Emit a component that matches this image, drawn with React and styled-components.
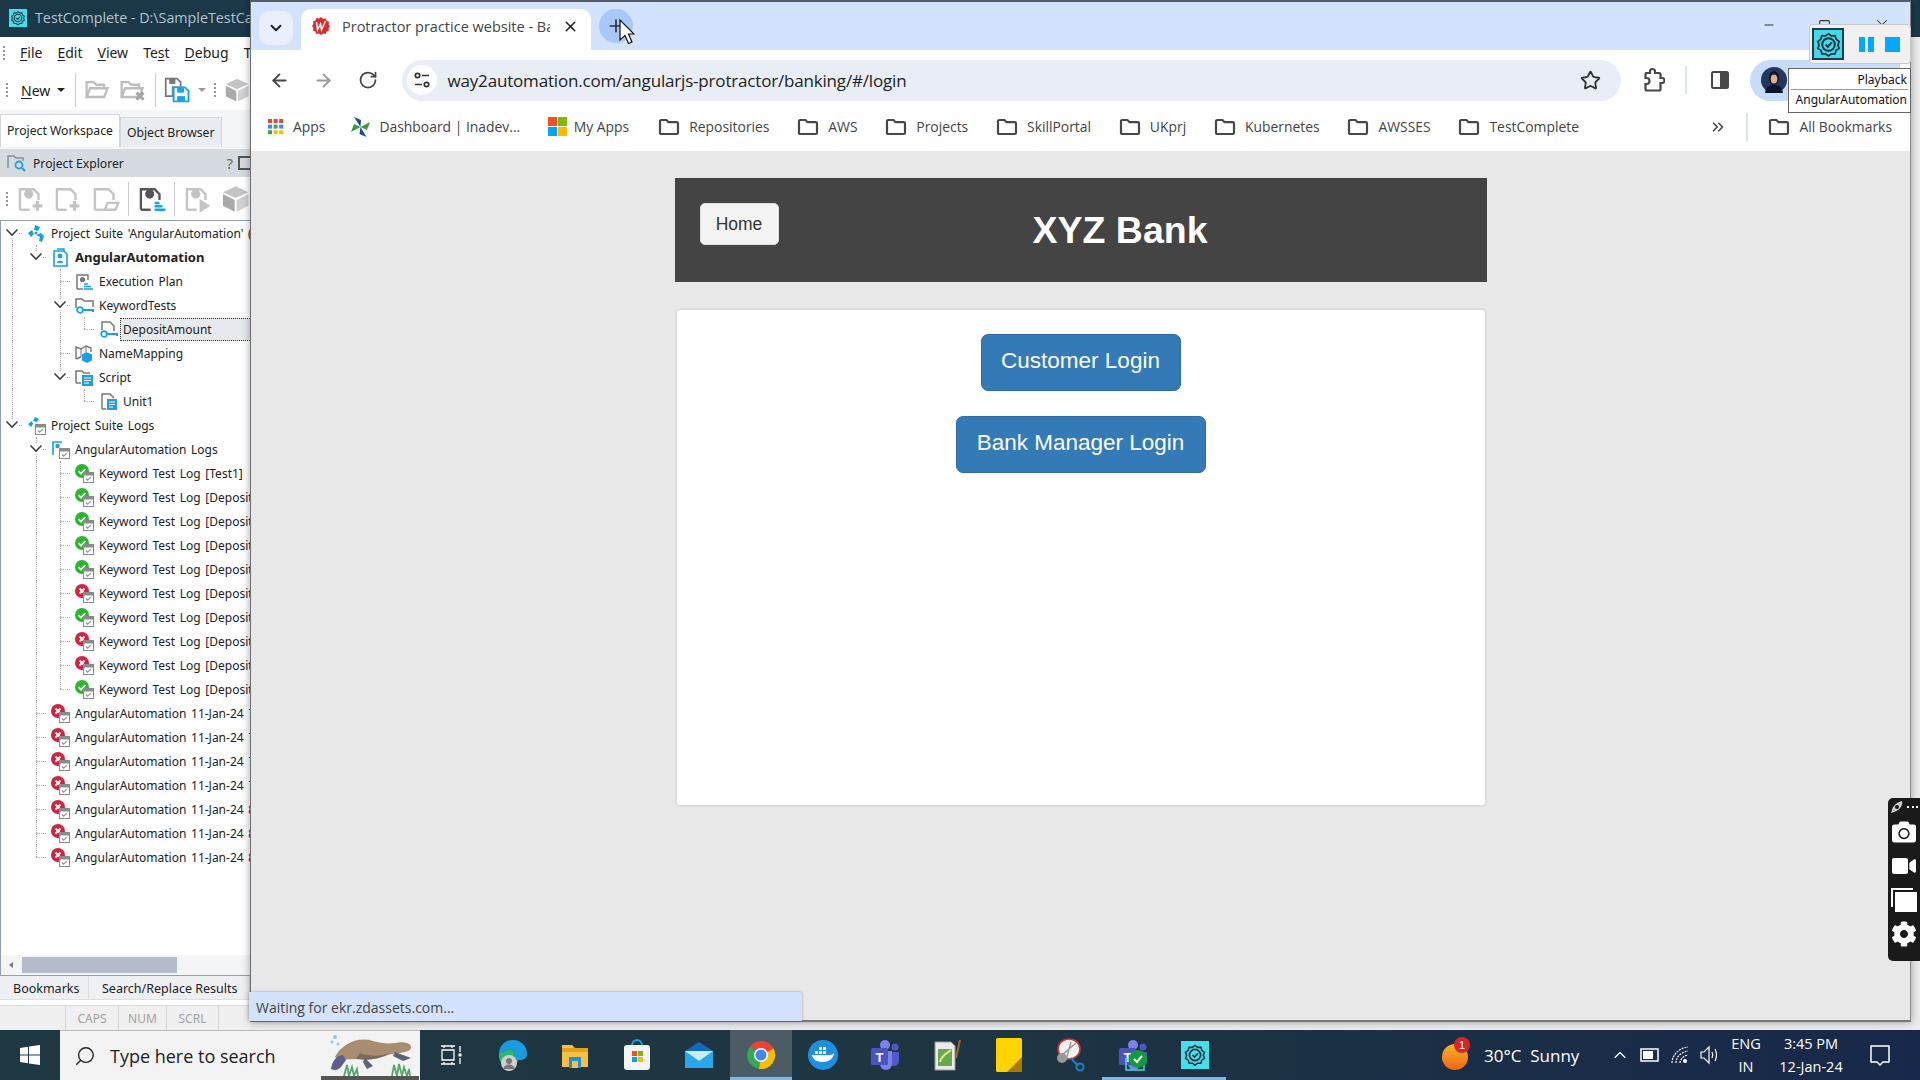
import styled, { createGlobalStyle } from "styled-components";
import { ArrowLeft, ArrowRight, RotateCw, Star, X, Plus, ChevronDown, ChevronsRight, Search, ChevronUp, Minus, Square } from "lucide-react";
import { FaCamera, FaVideo, FaCog } from "react-icons/fa";

const UI_FONT = `"Open Sans", "Noto Sans", "Liberation Sans", sans-serif`;
const IDE_FONT = `"Noto Sans", "DejaVu Sans", sans-serif`;

const GlobalStyle = createGlobalStyle`
    html, body {
        margin: 0;
        padding: 0;
        width: 1920px;
        height: 1080px;
        overflow: hidden;
        font-family: ${UI_FONT};
    }
    * { box-sizing: border-box; }
`;

const Desktop = styled.div`
    width: 1920px;
    height: 1080px;
    display: flex;
    flex-direction: column;
    position: relative;
    overflow: hidden;
`;
const Workspace = styled.div`
    height: 1030px;
    display: flex;
    align-items: flex-start;
    background: #ececec;
`;

/* ---------- TestComplete window ---------- */
const Ide = styled.div`
    width: 250px;
    height: 1030px;
    flex: none;
    display: flex;
    flex-direction: column;
    font-family: ${IDE_FONT};
    color: #222;
    overflow: hidden;
    background: #f4f5f6;
`;
const IdeTitle = styled.div`
    height: 37px;
    flex: none;
    background: #1b3849;
    color: #b4c3cc;
    display: flex;
    align-items: center;
    gap: 8px;
    padding: 0 0 2px 9px;
    font-family: ${UI_FONT};
    font-size: 14.3px;
    white-space: nowrap;
`;
const MenuBar = styled.div`
    height: 33px;
    flex: none;
    background: #fff;
    display: flex;
    align-items: center;
    padding: 0 0 2px 3px;
    gap: 15px;
    font-size: 14px;
    white-space: nowrap;
`;
const Grip = styled.span`
    width: 2px;
    height: ${(props) => props.$h || 14}px;
    flex: none;
    border-left: 2px dotted #999;
`;
const MenuItem = styled.span`
    color: #222;
    u { text-underline-offset: 2px; }
`;
const NewMenu = styled.span`
    display: flex;
    align-items: center;
    gap: 7px;
    margin: 0 2px 0 5px;
    u { text-underline-offset: 2px; }
`;
const DropCaret = styled.span`
    width: 0;
    height: 0;
    border: 4px solid transparent;
    border-top: 4px solid ${(props) => props.$color || "#222"};
    border-bottom: none;
`;
const IdeToolbar = styled.div`
    height: ${(props) => props.$h}px;
    flex: none;
    background: #fff;
    display: flex;
    align-items: center;
    gap: 8px;
    padding-left: 6px;
    font-size: 14px;
    white-space: nowrap;
`;
const ToolDivider = styled.span`
    width: 1px;
    height: 34px;
    flex: none;
    background: #ccc;
`;
const TabRow = styled.div`
    height: 39px;
    flex: none;
    padding-top: 4px;
    display: flex;
    align-items: flex-end;
    font-size: 12.2px;
    border-bottom: 2px solid #f4f5f6;
`;
const WorkspaceTab = styled.div`
    height: ${(props) => (props.$active ? 33 : 30)}px;
    padding: 0 6px ${(props) => (props.$active ? 2 : 0)}px;
    display: flex;
    align-items: center;
    white-space: nowrap;
    background: ${(props) => (props.$active ? "#fff" : "#e9ecf0")};
    border: 1px solid #d3d7dd;
    border-bottom: none;
`;
const PanelHeader = styled.div`
    height: 28px;
    flex: none;
    background: #d6dbe2;
    display: flex;
    align-items: center;
    padding-left: 7px;
    gap: 6px;
    font-size: 12.2px;
`;
const PanelButtons = styled.div`
    margin-left: auto;
    display: flex;
    align-items: center;
    gap: 5px;
    font-size: 15px;
    color: #666;
    margin-right: -2px;
`;
const PanelBox = styled.span`
    width: 14px;
    height: 14px;
    border: 2px solid #555;
`;
const Tree = styled.div`
    flex: none;
    height: 735px;
    background: #fff;
    border-top: 1px solid #8fa0b5;
    border-left: 1px solid #8fa0b5;
    overflow: hidden;
    font-size: 12px;
    word-spacing: 1.5px;
`;
const TreeRow = styled.div`
    height: 24px;
    display: flex;
    align-items: center;
    white-space: nowrap;
    margin-left: -1px;
    font-weight: ${(props) => (props.$bold ? 700 : 400)};
    font-size: ${(props) => (props.$bold ? "13px" : "12px")};
`;
const GuideCell = styled.span`
    width: 24px;
    height: 24px;
    flex: none;
    position: relative;
    &::before {
        content: "";
        position: absolute;
        left: 12px;
        top: ${(props) => (props.$kind === "R" ? "12px" : "0")};
        height: ${(props) => ("LR".includes(props.$kind) ? "12px" : "24px")};
        border-left: 1px dotted #aaa;
        display: ${(props) => (props.$kind === " " ? "none" : "block")};
    }
    &::after {
        content: "";
        position: absolute;
        left: 12px;
        right: 2px;
        top: 12px;
        border-top: 1px dotted #aaa;
        display: ${(props) => ("TLR".includes(props.$kind) ? "block" : "none")};
    }
`;
const Chevron = styled.svg`
    position: absolute;
    left: 5px;
    top: 7px;
    z-index: 1;
    background: #fff;
`;
const IconCell = styled.span`
    width: 24px;
    height: 24px;
    flex: none;
    display: flex;
    align-items: center;
    justify-content: center;
`;
const TreeLabel = styled.span`
    padding-left: 2px;
    height: 23px;
    line-height: 21px;
    flex: ${(props) => (props.$selected ? 1 : "none")};
    background: ${(props) => (props.$selected ? "#e6e9ee" : "transparent")};
    border: 1px ${(props) => (props.$selected ? "dotted #333" : "solid transparent")};
    border-right: none;
`;
const HScroll = styled.div`
    height: 21px;
    flex: none;
    background: #f4f5f6;
    border-left: 1px solid #8fa0b5;
    border-bottom: 1px solid #8fa0b5;
    display: flex;
    align-items: center;
    padding-left: 8px;
    gap: 9px;
`;
const ScrollArrow = styled.span`
    border: 3px solid transparent;
    border-right: 4px solid #777;
    border-left: none;
`;
const ScrollThumb = styled.span`
    width: 155px;
    height: 16px;
    background: #b4bccb;
`;
const BottomTabs = styled.div`
    height: 24px;
    flex: none;
    display: flex;
    font-size: 12.5px;
    background: #eef0f3;
    border-bottom: 1px solid #dcdfe3;
`;
const BottomTab = styled.div`
    width: ${(props) => props.$w}px;
    flex: none;
    padding: 2px 0 0 13px;
    display: flex;
    align-items: center;
    white-space: nowrap;
    border-right: 1px solid #dcdfe3;
`;
const StatusGap = styled.div`
    height: 5px;
    flex: none;
    background: #fff;
`;
const IdeStatus = styled.div`
    height: 25px;
    flex: none;
    background: #f0f0f0;
    border-top: 1px solid #ddd;
    padding-left: 65px;
    display: flex;
    font-size: 12px;
    color: #a3a3a3;
`;
const StatusCell = styled.div`
    width: ${(props) => props.$w}px;
    flex: none;
    display: flex;
    align-items: center;
    justify-content: center;
    border-left: 1px solid #d6d6d6;
`;

/* ---------- Chrome window ---------- */
const Browser = styled.div`
    width: 1661px;
    height: 1022px;
    flex: none;
    display: flex;
    flex-direction: column;
    position: relative;
    border-top: 2px solid #565c66;
    border-left: 1px solid #6b6f75;
    border-right: 1px solid #888;
    border-bottom: 2px solid #777;
    box-shadow: 0 0 8px rgba(0, 0, 0, 0.35);
    z-index: 1;
    background: #fff;
`;
const TabStrip = styled.div`
    height: 48px;
    flex: none;
    background: #d3e3fd;
    display: flex;
    align-items: flex-end;
    padding-left: 8px;
`;
const TabListButton = styled.div`
    width: 34px;
    height: 34px;
    margin-bottom: 5px;
    border-radius: 10px;
    background: #e9f0fb;
    display: flex;
    align-items: center;
    justify-content: center;
    color: #222;
`;
const ActiveTab = styled.div`
    width: 290px;
    height: 41px;
    margin-left: 8px;
    background: #fff;
    border-radius: 10px 10px 0 0;
    display: flex;
    align-items: center;
    padding: 0 10px 7px 10px;
    font-size: 14.5px;
    color: #444;
    white-space: nowrap;
`;
const TabText = styled.span`
    width: 208px;
    margin-left: 11px;
    overflow: hidden;
    flex: none;
`;
const TabClose = styled.span`
    margin-left: 12px;
    display: flex;
    color: #222;
`;
const NewTab = styled.div`
    width: 34px;
    height: 34px;
    margin: 0 0 7px 8px;
    border-radius: 50%;
    background: #a8c7fa;
    display: flex;
    align-items: center;
    justify-content: center;
    color: #333;
`;
const WindowControls = styled.div`
    margin-left: auto;
    align-self: flex-start;
    display: flex;
    align-items: center;
    gap: 42px;
    padding: 14px 19px 0 0;
    color: #333;
`;
const Toolbar = styled.div`
    height: 52px;
    flex: none;
    background: #fff;
    display: flex;
    align-items: center;
    padding: 8px 0 0 6px;
    color: #474747;
`;
const NavButton = styled.span`
    width: 44.5px;
    flex: none;
    display: flex;
    justify-content: center;
    color: ${(props) => (props.$disabled ? "#9a9a9a" : "#474747")};
`;
const Omnibox = styled.div`
    width: 1219px;
    height: 41px;
    margin-left: 11px;
    flex: none;
    background: #e9eef6;
    border-radius: 21px;
    display: flex;
    align-items: center;
    padding-left: 5px;
    font-size: 17px;
    letter-spacing: -0.18px;
    color: #222;
    white-space: nowrap;
`;
const SiteInfo = styled.span`
    width: 30px;
    height: 30px;
    border-radius: 50%;
    background: #fff;
    flex: none;
    display: flex;
    align-items: center;
    justify-content: center;
`;
const UrlText = styled.span`
    margin-left: 11px;
`;
const OmniStar = styled.span`
    margin-left: auto;
    margin-right: 20px;
    display: flex;
`;
const ToolIcon = styled.span`
    width: ${(props) => props.$w}px;
    flex: none;
    display: flex;
    justify-content: center;
`;
const ToolSep = styled.span`
    width: 2px;
    height: 28px;
    flex: none;
    background: #d3e3fd;
`;
const ProfilePill = styled.div`
    margin-left: -3px;
    width: 150px;
    height: 41px;
    flex: none;
    border-radius: 21px 0 0 21px;
    background: #c7dbfb;
    padding-left: 11px;
    display: flex;
    align-items: center;
`;
const BookmarkBar = styled.div`
    height: 50px;
    flex: none;
    background: #fff;
    border-bottom: 1px solid #e4e7ec;
    display: flex;
    align-items: center;
    padding-left: 17px;
    font-size: 13.9px;
    color: #444;
    white-space: nowrap;
`;
const Bookmark = styled.span`
    display: flex;
    align-items: center;
    gap: ${(props) => props.$gap || 9}px;
    margin-right: ${(props) => props.$mr ?? 27.8}px;
`;
const MoreBookmarks = styled.span`
    margin-left: auto;
    width: 30px;
    display: flex;
    justify-content: center;
    color: #444;
`;
const BarSep = styled.span`
    width: 2px;
    height: 28px;
    background: #d3e3fd;
    margin: 0 20px 0 13px;
`;
const Page = styled.div`
    flex: 1;
    background: #e8e8e8;
    padding-top: 26px;
    font-family: "Liberation Sans", Arial, sans-serif;
    display: flex;
    flex-direction: column;
    align-items: center;
`;
const BankHeader = styled.div`
    width: 812px;
    height: 104px;
    flex: none;
    background: #444;
    display: flex;
    align-items: flex-start;
    padding-left: 25px;
`;
const HomeButton = styled.button`
    width: 79px;
    height: 42px;
    margin-top: 25px;
    flex: none;
    background: #f4f4f4;
    border: 1px solid #ddd;
    border-radius: 5px;
    font-family: inherit;
    font-size: 17.5px;
    color: #333;
    padding: 0;
`;
const BankTitle = styled.h1`
    flex: 1;
    margin: 31px 25px 0 0;
    text-align: center;
    color: #fff;
    font-size: 37.5px;
    line-height: 42px;
    font-weight: 700;
`;
const LoginCard = styled.div`
    width: 812px;
    height: 499px;
    margin-top: 26px;
    flex: none;
    background: #fff;
    border: 2px solid #ddd;
    border-radius: 5px;
    padding-top: 24px;
    display: flex;
    flex-direction: column;
    align-items: center;
    gap: 25px;
`;
const PrimaryButton = styled.button`
    width: ${(props) => props.$w}px;
    height: 57px;
    background: #337ab7;
    border: 1px solid #2e6da4;
    border-radius: 7px;
    color: #fff;
    font-family: inherit;
    font-size: 22.5px;
    padding: 0 0 4px;
`;
const LoadStatus = styled.div`
    position: absolute;
    left: -2px;
    bottom: -1px;
    width: 553px;
    height: 29px;
    background: #d3e3fd;
    color: #444;
    font-size: 14px;
    display: flex;
    align-items: center;
    padding: 2px 0 0 7px;
    border-radius: 0 3px 0 0;
    box-shadow: 0 0 3px rgba(0, 0, 0, 0.3);
`;
const RightEdge = styled.div`
    flex: 1;
    height: 1030px;
    display: flex;
    flex-direction: column;
`;
const TitleTail = styled.div`
    height: 37px;
    background: #1b3849;
`;

/* ---------- floating recorder bits ---------- */
const PlaybackBar = styled.div`
    position: absolute;
    left: 1809px;
    top: 24px;
    width: 102px;
    height: 40px;
    background: #f1f1f1;
    border: 1px solid #c8c8c8;
    border-radius: 4px;
    display: flex;
    align-items: center;
    padding-left: 2px;
    z-index: 3;
`;
const PlaybackTile = styled.span`
    width: 32px;
    height: 32px;
    background: #3fdbe9;
    border: 2px solid #1d3b4b;
    display: flex;
    align-items: center;
    justify-content: center;
    flex: none;
`;
const PauseBars = styled.span`
    margin-left: 15px;
    width: 15px;
    height: 15px;
    border-left: 6px solid #00a8ff;
    border-right: 6px solid #00a8ff;
`;
const StopSquare = styled.span`
    margin-left: 11px;
    width: 15px;
    height: 15px;
    background: #00a8ff;
`;
const PlaybackTip = styled.div`
    position: absolute;
    left: 1788px;
    top: 68px;
    width: 123px;
    height: 45px;
    background: #fff;
    border: 1px solid #666;
    z-index: 2;
    font-family: ${IDE_FONT};
    font-size: 12px;
    color: #111;
    text-align: right;
    padding: 1px 2px 0;
`;
const TipLine = styled.div`
    height: ${(props) => (props.$rule ? 20 : 21)}px;
    line-height: 19px;
    border-bottom: ${(props) => (props.$rule ? "1px solid #999" : "none")};
    padding-right: 1px;
`;
const CaptureDock = styled.div`
    position: absolute;
    left: 1888px;
    top: 798px;
    width: 32px;
    height: 163px;
    background: #1a1a1a;
    border-radius: 5px 0 0 5px;
    color: #fff;
    display: flex;
    flex-direction: column;
    align-items: center;
    padding-top: 1px;
    z-index: 3;
`;
const DockTop = styled.div`
    height: 16px;
    display: flex;
    align-items: center;
    gap: 3px;
    font-size: 10px;
`;
const DockSlot = styled.div`
    height: 34px;
    display: flex;
    align-items: center;
    justify-content: center;
`;
const DockDots = styled.span`
    width: 11px;
    border-top: 2px dotted #fff;
`;
const Pointer = styled.svg`
    position: absolute;
    left: 619px;
    top: 19px;
    z-index: 4;
`;

/* ---------- taskbar ---------- */
const Taskbar = styled.div`
    height: 50px;
    flex: none;
    display: flex;
    align-items: stretch;
    background: linear-gradient(90deg, #1f3943 0%, #1e3542 50%, #18284a 100%);
    color: #fff;
    position: relative;
    z-index: 2;
`;
const StartSlot = styled.div`
    width: 60px;
    flex: none;
    display: flex;
    align-items: center;
    justify-content: center;
`;
const SearchBox = styled.div`
    width: 360px;
    flex: none;
    background: #f3f3f3;
    border-top: 1px solid #bbb;
    color: #222;
    display: flex;
    align-items: center;
    padding-left: 14px;
    gap: 14px;
    font-size: 18px;
    white-space: nowrap;
`;
const SearchArt = styled.span`
    margin-left: auto;
    display: flex;
`;
const TaskSlot = styled.div`
    width: 62px;
    flex: none;
    display: flex;
    align-items: center;
    justify-content: center;
    background: ${(props) => (props.$focus ? "#4c5c66" : "transparent")};
    border-bottom: 3px solid ${(props) => (props.$active ? "#76b9ed" : "transparent")};
    border-top: 3px solid transparent;
`;
const Tray = styled.div`
    margin-left: auto;
    display: flex;
    align-items: center;
    font-size: 14.5px;
    padding-right: 15px;
    color: #fff;
`;
const WeatherText = styled.span`
    width: 97px;
    margin: 0 24px 0 14px;
    font-size: 17px;
    white-space: nowrap;
`;
const TrayIcon = styled.span`
    width: 30px;
    flex: none;
    display: flex;
    justify-content: center;
`;
const TrayText = styled.div`
    width: ${(props) => props.$w}px;
    flex: none;
    text-align: center;
    line-height: 23px;
    white-space: nowrap;
`;
const NotifySlot = styled.span`
    width: 50px;
    flex: none;
    display: flex;
    justify-content: center;
`;

/* ---------- icons ---------- */
const Sealed = ({ size = 24, color = "#163040" }) => (
    <svg width={size} height={size} viewBox="0 0 24 24" fill="none" stroke={color} strokeWidth="1.7">
        <path d="M12 2l3 2.2 3.6-.2 1 3.5 2.9 2.2-1.2 3.4 1.2 3.4-3 1.9-1 3.5-3.6-.1L12 24l-2.9-2.2-3.6.1-1-3.5-3-1.9 1.2-3.4L1.5 9.7l2.9-2.2 1-3.5 3.6.2z" transform="translate(1.2 .6) scale(.9)" />
        <circle cx="12" cy="12" r="5.6" />
        <path d="M9.5 12l2 2 3.4-3.8" />
    </svg>
);
const AppTile = styled.span`
    width: ${(props) => props.$s}px;
    height: ${(props) => props.$s}px;
    background: #45dfe9;
    display: flex;
    align-items: center;
    justify-content: center;
    flex: none;
`;
const GreyFolder = ({ cross }) => (
    <svg width="31" height="28" viewBox="0 0 31 28" fill="none" stroke="#bdbdbd" strokeWidth="2.6">
        <path d="M3 22V5h8l3 3h9v4M3 22l4-10h20l-4 10z" />
        {cross && <path d="M20 17l8 8m0-8l-8 8" stroke="#a5a5a5" strokeWidth="3.4" />}
    </svg>
);
const SaveIcon = () => (
    <svg width="30" height="30" viewBox="0 0 30 30">
        <path d="M2 2h13l4 4v6H10v10H2z" fill="none" stroke="#777" strokeWidth="2" />
        <rect x="6" y="2" width="7" height="6" fill="#777" />
        <path d="M11 12h13l4 4v12H11z" fill="#fff" stroke="#17a4e6" strokeWidth="2.2" />
        <rect x="15" y="12" width="8" height="6" fill="#17a4e6" />
        <rect x="15" y="22" width="9" height="6" fill="#17a4e6" />
    </svg>
);
const CubeTool = () => (
    <svg width="30" height="30" viewBox="0 0 30 30">
        <path d="M15 2l13 6-13 6L2 8z" fill="#c4c4c4" />
        <path d="M2 10l12 6v12L2 22z" fill="#aaa" />
        <path d="M28 10l-12 6v12l12-6z" fill="#d0d0d0" />
    </svg>
);
const ProjectTool = ({ kind = "plus", dark }) => {
    const c = dark ? "#555" : "#c4c4c4";
    return (
        <svg width="30" height="30" viewBox="0 0 30 30" fill="none" stroke={c} strokeWidth="2.4">
            <path d="M4 26V5h14l5 5v6" />
            <path d="M4 26h10" />
            {kind !== "docplus" && kind !== "open" && <circle cx="13" cy="10" r="3.5" fill={c} />}
            {(kind === "plus" || kind === "docplus") && <path d="M22 17v10m-5-5h10" strokeWidth="3.2" />}
            {kind === "open" && <path d="M14 26l3-7h11l-3 7z" />}
            {kind === "bars" && <path d="M18 19h5m-5 3.5h8m-8 3.5h11" stroke="#18a4e6" strokeWidth="2.6" />}
            {kind === "play" && <path d="M17 15l11 7-11 7z" fill={c} stroke="none" />}
        </svg>
    );
};
const Check = () => <path d="M3.6 7.2l2.4 2.4 4.3-4.4" fill="none" stroke="#fff" strokeWidth="1.8" />;
const LogCalendar = () => (
    <g>
        <rect x="8.5" y="8.5" width="10" height="10" fill="#fff" stroke="#8b8b8b" />
        <rect x="8.5" y="8.5" width="10" height="3" fill="#8b8b8b" />
        <path d="M11 14.5l1.7 1.7 3-3" fill="none" stroke="#8b8b8b" strokeWidth="1.1" />
    </g>
);
const TreeIcon = ({ kind }) => {
    if (kind === "green" || kind === "red") {
        return (
            <svg width="19" height="19" viewBox="0 0 19 19">
                <circle cx="7" cy="7" r="7" fill={kind === "green" ? "#2db52d" : "#d5213f"} />
                {kind === "green" ? <Check /> : <path d="M4.5 4.5l5 5m0-5l-5 5" stroke="#fff" strokeWidth="1.9" />}
                <LogCalendar />
            </svg>
        );
    }
    const blue = "#1a9fe3";
    const grey = "#777";
    const svg = (body) => <svg width="19" height="19" viewBox="0 0 19 19" fill="none">{body}</svg>;
    switch (kind) {
        case "suite":
            return svg(<g fill={blue}><path d="M8 1l5 2-2 4-4-1zM1 9l4-3 2 4-3 3zM9 11l5-2 3 3-2 6-3-1 1-4z" /><circle cx="9" cy="9" r="1.5" /></g>);
        case "suitelog":
            return svg(<g><path d="M8 1l4 2-2 3-4-1zM1 8l4-3 1 3-2 3z" fill={blue} /><LogCalendar /></g>);
        case "project":
            return svg(<g><path d="M3 3h10l3 3v12H3z" fill="#fff" stroke={blue} strokeWidth="1.6" /><path d="M6 1h7v3" stroke={blue} strokeWidth="1.4" /><circle cx="9" cy="8" r="2.4" fill={blue} /><path d="M6 15c0-3 6-3 6 0z" fill={blue} /></g>);
        case "projectlog":
            return svg(<g><path d="M2 15V2h9" stroke={blue} strokeWidth="1.6" /><circle cx="6.5" cy="6" r="2.2" fill={blue} /><LogCalendar /></g>);
        case "plan":
            return svg(<g><path d="M2 17V3h11v5" stroke={grey} strokeWidth="1.5" /><path d="M2 17h6" stroke={grey} strokeWidth="1.5" /><circle cx="7.5" cy="7.5" r="2.6" fill={grey} /><path d="M9 12h4m-4 2.5h7m-7 2.5h9" stroke={blue} strokeWidth="1.6" /></g>);
        case "folderkey":
            return svg(<g><path d="M1 12V3h6l2 2h9v6" stroke={grey} strokeWidth="1.5" /><circle cx="5" cy="14" r="2.8" stroke={blue} strokeWidth="1.8" /><path d="M8 14h10v2" stroke={blue} strokeWidth="2" /></g>);
        case "dockey":
            return svg(<g><path d="M3 10V2h8l4 4v5" stroke={grey} strokeWidth="1.5" /><circle cx="5" cy="14" r="2.8" stroke={blue} strokeWidth="1.8" /><path d="M8 14h10v2" stroke={blue} strokeWidth="2" /></g>);
        case "map":
            return svg(<g><path d="M1 15V3l5 2 5-3 5 2v4M1 15l5-2" stroke={grey} strokeWidth="1.4" /><path d="M6 5v8M11 2v6" stroke={grey} /><path d="M11 8l6 2.5v6L12 19l-5-2.5v-6z" fill={blue} /></g>);
        case "folderscript":
            return svg(<g><path d="M1 15V3h6l2 2h6" stroke={grey} strokeWidth="1.5" /><path d="M1 15h5" stroke={grey} strokeWidth="1.5" /><rect x="7" y="7" width="11" height="11" fill={blue} /><path d="M9 10h7m-7 2.5h7m-7 2.5h5" stroke="#fff" /></g>);
        case "docscript":
            return svg(<g><path d="M3 17V2h8l4 4" stroke={grey} strokeWidth="1.5" /><path d="M3 17h4" stroke={grey} strokeWidth="1.5" /><rect x="8" y="7" width="10" height="11" fill={blue} /><path d="M10 10h6m-6 2.5h6m-6 2.5h4" stroke="#fff" /></g>);
        default:
            return null;
    }
};
const BmFolder = () => (
    <svg width="22" height="18" viewBox="0 0 22 18" fill="none" stroke="#474747" strokeWidth="2.2">
        <path d="M2 3.2C2 2.4 2.5 2 3.2 2h5.3l2 2.2h8.3c.8 0 1.2.5 1.2 1.2v9.4c0 .8-.5 1.2-1.2 1.2H3.2C2.500 16 2 15.600 2 14.800z" />
    </svg>
);
const AppsGrid = () => {
    const colors = ["#ea4335", "#ea4335", "#ea4335", "#4285f4", "#34a853", "#4285f4", "#34a853", "#fbbc05", "#fbbc05"];
    return (
        <svg width="16" height="16" viewBox="0 0 16 16">
            {colors.map((c, i) => (
                <rect key={i} x={(i % 3) * 5.6} y={Math.floor(i / 3) * 5.6} width="4" height="4" fill={c} />
            ))}
        </svg>
    );
};
const Pinwheel = () => (
    <svg width="21" height="22" viewBox="0 0 21 22">
        <path d="M10.500 11L4 1l7 3z" fill="#1c4b8c" />
        <path d="M10.500 11L20 6l-3 8z" fill="#3a9a46" />
        <path d="M10.500 11l6 10-7-3z" fill="#1c4b8c" />
        <path d="M10.500 11L1 16l3-8z" fill="#3a9a46" />
    </svg>
);
const MsLogo = ({ size = 19 }) => (
    <svg width={size} height={size} viewBox="0 0 20 20">
        <rect width="9.500" height="9.500" fill="#f25022" />
        <rect x="10.500" width="9.500" height="9.500" fill="#7fba00" />
        <rect y="10.500" width="9.500" height="9.500" fill="#00a4ef" />
        <rect x="10.500" y="10.500" width="9.500" height="9.500" fill="#ffb900" />
    </svg>
);
const Favicon = () => (
    <svg width="20" height="20" viewBox="0 0 20 20">
        <path d="M10 1l2 1.800 2.600-.4 1 2.400 2.400 1-.4 2.600L19 10l-1.400 2 .4 2.600-2.400 1-1 2.400-2.600-.4L10 19l-2-1.400-2.600.4-1-2.400-2.400-1 .4-2.600L1 10l1.400-2L2 5.400l2.400-1 1-2.400 2.600.4z" fill="#e0282c" />
        <path d="M5.500 6l1 8 3-6 1 6 4-9" fill="none" stroke="#fff" strokeWidth="1.5" />
    </svg>
);
const TuneIcon = () => (
    <svg width="18" height="18" viewBox="0 0 18 18" fill="none" stroke="#333" strokeWidth="1.7">
        <circle cx="4.500" cy="4.500" r="2.200" />
        <path d="M9 4.500h7M2 13.500h7" />
        <circle cx="13.500" cy="13.500" r="2.200" />
    </svg>
);
const Extension = () => (
    <svg width="24" height="26" viewBox="0 0 24 26" fill="none" stroke="#474747" strokeWidth="2.200">
        <path d="M5 6h4V4.500a2.500 2.500 0 015 0V6h4c1 0 1.500.6 1.500 1.500V11H21a2.500 2.500 0 010 5h-1.500v6c0 1-.5 1.500-1.500 1.500H6c-1 0-1.500-.5-1.500-1.500v-5h1a3 3 0 000-6h-1V7.500C4.500 6.500 5 6 5 6z" />
    </svg>
);
const SidePanel = () => (
    <svg width="20" height="20" viewBox="0 0 20 20">
        <rect x="2" y="2" width="16" height="16" rx="1.500" fill="none" stroke="#474747" strokeWidth="2" />
        <rect x="10" y="2" width="8" height="16" fill="#474747" />
    </svg>
);
const Avatar = () => (
    <svg width="26" height="26" viewBox="0 0 26 26">
        <circle cx="13" cy="13" r="13" fill="#23375f" />
        <path d="M4 26c1-7 5-8 9-8s8 1 9 8z" fill="#0b1530" />
        <ellipse cx="13" cy="11" rx="5" ry="7" fill="#0c1428" />
        <ellipse cx="13" cy="12" rx="3.300" ry="4.500" fill="#e2ae8e" />
    </svg>
);
const WinLogo = () => (
    <svg width="20" height="20" viewBox="0 0 20 20" fill="#fff">
        <path d="M0 3l8-1.200v7.700H0zM9 1.600L20 0v9.500H9zM0 10.500h8v7.700L0 17zM9 10.500h11V20L9 18.400z" />
    </svg>
);
const Platypus = () => (
    <svg width="100" height="50" viewBox="0 0 100 50">
        <circle cx="15" cy="6" r="2" fill="#8ec6ee" />
        <circle cx="12" cy="11" r="1.500" fill="#8ec6ee" />
        <circle cx="18" cy="13" r="1.500" fill="#8ec6ee" />
        <path d="M15 26c6-12 22-21 38-16 8 2 14 3 22 2 8-2 17 0 16 5-2 5-13 5-20 6-8 3-22 5-34 5-8 0-15 2-22-2z" fill="#a88d70" />
        <path d="M40 22c10 4 22 3 30 0-8 6-22 8-34 6z" fill="#7d6a58" />
        <path d="M11 38c1-8 6-14 12-14l3 5-5 7c-3 3-6 4-10 2z" fill="#5e5f8e" />
        <path d="M45 27l8 8-6 3-4-7z M75 21l16 6-8 3-10-5z" fill="#5e5f78" />
        <path d="M24 45l3-11 2 11 3-9 2 9 3-7 1 7M72 45l2-11 3 11 2-12 3 12 2-9 3 9 2-7 1 7" fill="none" stroke="#56a86a" strokeWidth="1.800" />
        <rect x="1" y="45" width="98" height="4" fill="#555" />
    </svg>
);
const TaskView = () => (
    <svg width="22" height="20" viewBox="0 0 22 20" fill="none" stroke="#fff" strokeWidth="1.300">
        <path d="M1 1h14M4 1v2M12 1v2M1 19h14M4 17v2M12 17v2M2 5h12v10H2z" />
        <path d="M20 1v6M20 13v6" />
        <rect x="18.500" y="8.500" width="3" height="3" fill="#fff" stroke="none" />
    </svg>
);
const EdgeLogo = () => (
    <svg width="30" height="32" viewBox="0 0 30 32">
        <path d="M1 15C1 6 8 1 15 1c8 0 14 6 14 14 0 5-5 7-9 6-4-1-4-5-3-7-2-4-8-4-12-1-2 1-3 3-4 5z" fill="#1a9be0" />
        <path d="M5 13c4-3 10-3 12 1-1 2-1 6 3 7-1 5-5 8-9 8C7 28 0 24 1 15z" fill="#2fc37f" opacity="0.9" />
        <circle cx="11" cy="24" r="8" fill="#cfcfcf" />
        <circle cx="11" cy="22" r="3" fill="#777" />
        <path d="M5.500 30c0-6 11-6 11 0z" fill="#777" />
    </svg>
);
const ExplorerLogo = () => (
    <svg width="28" height="26" viewBox="0 0 28 26">
        <path d="M1 3h10l3 3h13v19H1z" fill="#f5c043" />
        <rect x="1" y="6" width="26" height="4" fill="#e2a51a" />
        <rect x="8" y="15" width="12" height="11" fill="#1e90d8" />
        <rect x="11" y="19" width="6" height="7" fill="#f5c043" />
    </svg>
);
const StoreLogo = () => (
    <svg width="28" height="32" viewBox="0 0 28 32">
        <path d="M9 7c0-8 10-8 10 0" fill="none" stroke="#16a3e2" strokeWidth="2" />
        <rect x="1" y="6" width="26" height="25" rx="3" fill="#f4f4f4" />
        <rect x="9" y="12" width="5" height="5" fill="#f25022" />
        <rect x="15" y="12" width="5" height="5" fill="#7fba00" />
        <rect x="9" y="18" width="5" height="5" fill="#00a4ef" />
        <rect x="15" y="18" width="5" height="5" fill="#ffb900" />
    </svg>
);
const MailLogo = () => (
    <svg width="30" height="28" viewBox="0 0 30 28">
        <path d="M15 1L1 10v17h28V10z" fill="#0f6cbd" />
        <path d="M1 10h28v17H1z" fill="#28a8ea" />
        <path d="M1 10l14 10 14-10z" fill="#c9ecfb" />
    </svg>
);
const ChromeLogo = () => (
    <svg width="30" height="30" viewBox="0 0 30 30">
        <path d="M15 15L4 6.500A14 14 0 0127.500 8.500z" fill="#ea4335" />
        <path d="M15 15L4 6.500A14 14 0 0013 28.900z" fill="#34a853" />
        <path d="M15 15l12.500-6.500A14 14 0 0113 28.900z" fill="#fbbc05" />
        <circle cx="15" cy="15" r="7" fill="#fff" />
        <circle cx="15" cy="15" r="5.500" fill="#4285f4" />
    </svg>
);
const DockerLogo = () => (
    <svg width="32" height="32" viewBox="0 0 32 32">
        <circle cx="16" cy="16" r="15" fill="#1e8fe1" />
        <path d="M5 16h18c2 0 3-1 4-2 0 5-5 9-11 9-6 0-10-2-11-7z" fill="#fff" />
        <path d="M8 12h3v3H8zM12 12h3v3h-3zM16 12h3v3h-3zM12 8h3v3h-3zM16 8h3v3h-3z" fill="#fff" />
    </svg>
);
const TeamsLogo = ({ badge }) => (
    <svg width="32" height="32" viewBox="0 0 32 32">
        <circle cx="16" cy="6" r="5" fill="#7b83eb" />
        <circle cx="26" cy="8" r="3.500" fill="#5059c9" />
        <path d="M21 13h9v9a5 5 0 01-9 3z" fill="#5059c9" />
        <path d="M11 12h12v13a6 6 0 01-12 0z" fill="#7b83eb" />
        <rect x="2" y="9" width="17" height="17" rx="1.500" fill="#4b53bc" />
        <text x="10.500" y="22.500" textAnchor="middle" fontSize="13" fontWeight="700" fill="#fff" fontFamily="Liberation Sans, sans-serif">T</text>
        {badge && (
            <g>
                <rect x="9" y="20" width="18" height="11" fill="none" stroke="#3fdbe9" strokeWidth="1.500" />
                <circle cx="21" cy="20" r="9" fill="#109c3c" />
                <path d="M17 20l3 3 5-6" fill="none" stroke="#fff" strokeWidth="2" />
            </g>
        )}
    </svg>
);
const ScriptLogo = () => (
    <svg width="30" height="34" viewBox="0 0 30 34">
        <path d="M3 4h16l4 4v24H3z" fill="#eaeaea" stroke="#999" />
        <rect x="6" y="11" width="14" height="17" fill="#6aa84f" />
        <path d="M8 24c2-8 8-9 11-12" stroke="#d8ef8a" strokeWidth="2" fill="none" />
        <path d="M24 20l4-18" stroke="#a06a20" strokeWidth="2" />
    </svg>
);
const StickyLogo = () => (
    <svg width="26" height="34" viewBox="0 0 26 34">
        <rect width="26" height="34" rx="1.500" fill="#ffd400" />
        <path d="M26 19v15H11z" fill="#a87a00" />
    </svg>
);
const SnipLogo = () => (
    <svg width="30" height="34" viewBox="0 0 30 34">
        <ellipse cx="13" cy="11" rx="11" ry="10" fill="#f2f2f2" stroke="#d93030" strokeWidth="1.600" />
        <path d="M6 17L20 5M15 4l-5 18" stroke="#999" strokeWidth="1.500" />
        <circle cx="6" cy="20" r="5" fill="#9a9a9a" />
        <circle cx="24" cy="29" r="3.500" fill="none" stroke="#1a7fc4" strokeWidth="2" />
        <path d="M15 20l7 8" stroke="#1a7fc4" strokeWidth="2" />
    </svg>
);
const WeatherBall = () => (
    <svg width="28" height="38" viewBox="0 0 28 38">
        <defs>
            <linearGradient id="sun" x1="0" y1="0" x2="0" y2="1">
                <stop offset="0" stopColor="#f8b820" />
                <stop offset="1" stopColor="#f0641c" />
            </linearGradient>
        </defs>
        <circle cx="13" cy="21" r="13" fill="url(#sun)" />
        <circle cx="20" cy="9" r="8" fill="#d9252a" />
        <text x="20" y="13" textAnchor="middle" fontSize="11" fill="#fff" fontFamily="Liberation Sans, sans-serif">1</text>
    </svg>
);
const BatteryIcon = () => (
    <svg width="20" height="14" viewBox="0 0 20 14">
        <rect x="1" y="1" width="17" height="12" fill="none" stroke="#fff" strokeWidth="1.500" />
        <rect x="3" y="3" width="10" height="8" fill="#fff" />
    </svg>
);
const WifiIcon = () => (
    <svg width="20" height="20" viewBox="0 0 20 20" fill="none" stroke="#fff" strokeWidth="1.200">
        <path d="M2 18C2 10 9 3 18 2M6 18c0-6 5-11 12-12M10 18c0-3 3-7 8-8" strokeDasharray="2 1" />
        <circle cx="15" cy="16" r="1.500" fill="#fff" />
    </svg>
);
const VolumeIcon = () => (
    <svg width="22" height="22" viewBox="0 0 22 22" fill="none" stroke="#fff" strokeWidth="1.200">
        <path d="M2 8h3l5-5v16l-5-5H2zM13 8c1 2 1 4 0 6M16 5c2 4 2 8 0 12" />
    </svg>
);
const NotifyIcon = () => (
    <svg width="22" height="22" viewBox="0 0 22 22" fill="none" stroke="#fff" strokeWidth="1.500">
        <path d="M2 2h18v16h-6l-3 3-3-3H2z" />
    </svg>
);
const GlobeTiny = () => (
    <svg width="14" height="14" viewBox="0 0 14 14" fill="#ccc">
        <path d="M12 1c1 3-1 7-4 9-3 2-5 2-7 3 1-3 1-5 3-7 2-3 5-4 8-5z" />
        <circle cx="7" cy="7" r="2" fill="#1a1a1a" />
    </svg>
);

/* ---------- data ---------- */
const kwLogs = ["green", "green", "green", "green", "green", "red", "green", "red", "red", "green"];
const treeRows = [
    { g: "R", icon: "suite", text: "Project Suite 'AngularAutomation' (1 project)", open: true },
    { g: "|L", icon: "project", text: "AngularAutomation", open: true, bold: true },
    { g: "| T", icon: "plan", text: "Execution Plan" },
    { g: "| T", icon: "folderkey", text: "KeywordTests", open: true },
    { g: "| |L", icon: "dockey", text: "DepositAmount", selected: true },
    { g: "| T", icon: "map", text: "NameMapping" },
    { g: "| L", icon: "folderscript", text: "Script", open: true },
    { g: "|  L", icon: "docscript", text: "Unit1" },
    { g: "L", icon: "suitelog", text: "Project Suite Logs", open: true },
    { g: " T", icon: "projectlog", text: "AngularAutomation Logs", open: true },
    ...kwLogs.map((icon, i) => ({
        g: i === kwLogs.length - 1 ? " |L" : " |T",
        icon,
        text: i === 0 ? "Keyword Test Log [Test1]" : "Keyword Test Log [DepositAmount]",
    })),
    ...["7", "7", "7", "7", "8", "8", "8"].map((hour, i) => ({
        g: i === 6 ? " L" : " T",
        icon: "red",
        text: `AngularAutomation 11-Jan-24 ${hour}:14`,
    })),
];
const bookmarks = ["Repositories", "AWS", "Projects", "SkillPortal", "UKprj", "Kubernetes", "AWSSES", "TestComplete"];

const ChevronMark = () => (
    <Chevron width="14" height="10" viewBox="0 0 14 10" fill="none" stroke="#444" strokeWidth="1.600">
        <path d="M1.500 1.500L7 7l5.500-5.500" />
    </Chevron>
);

const App = () => {
    return (
        <Desktop>
            <GlobalStyle />
            <Workspace>
                <Ide>
                    <IdeTitle>
                        <AppTile $s={18}><Sealed size={16} /></AppTile>
                        TestComplete - D:\SampleTestCase
                    </IdeTitle>
                    <MenuBar>
                        <Grip />
                        <MenuItem><u>F</u>ile</MenuItem>
                        <MenuItem><u>E</u>dit</MenuItem>
                        <MenuItem><u>V</u>iew</MenuItem>
                        <MenuItem>Te<u>s</u>t</MenuItem>
                        <MenuItem><u>D</u>ebug</MenuItem>
                        <MenuItem>T<u>o</u>ols</MenuItem>
                    </MenuBar>
                    <IdeToolbar $h={40}>
                        <Grip />
                        <NewMenu><span><u>N</u>ew</span><DropCaret /></NewMenu>
                        <ToolDivider />
                        <GreyFolder />
                        <GreyFolder cross />
                        <ToolDivider />
                        <SaveIcon />
                        <DropCaret $color="#999" />
                        <Grip />
                        <CubeTool />
                    </IdeToolbar>
                    <TabRow>
                        <WorkspaceTab $active>Project Workspace</WorkspaceTab>
                        <WorkspaceTab>Object Browser</WorkspaceTab>
                    </TabRow>
                    <PanelHeader>
                        <svg width="20" height="18" viewBox="0 0 20 18" fill="none" stroke="#8a8f98" strokeWidth="1.500">
                            <path d="M1 14V2h6l2 2h7v3" />
                            <circle cx="12" cy="11" r="3.500" stroke="#1a9fe3" strokeWidth="1.800" />
                            <path d="M15 14l3 3" stroke="#1a9fe3" strokeWidth="2" />
                        </svg>
                        Project Explorer
                        <PanelButtons>?<PanelBox /></PanelButtons>
                    </PanelHeader>
                    <IdeToolbar $h={43}>
                        <Grip />
                        <ProjectTool kind="plus" />
                        <ProjectTool kind="docplus" />
                        <ProjectTool kind="open" />
                        <ToolDivider />
                        <ProjectTool kind="bars" dark />
                        <ToolDivider />
                        <ProjectTool kind="play" />
                        <CubeTool />
                    </IdeToolbar>
                    <Tree>
                        {treeRows.map((row, i) => {
                            const cells = row.g.split("");
                            return (
                                <TreeRow key={i} $bold={row.bold}>
                                    {cells.map((kind, c) => (
                                        <GuideCell key={c} $kind={kind}>
                                            {row.open && c === cells.length - 1 && <ChevronMark />}
                                        </GuideCell>
                                    ))}
                                    <IconCell><TreeIcon kind={row.icon} /></IconCell>
                                    <TreeLabel $selected={row.selected}>{row.text}</TreeLabel>
                                </TreeRow>
                            );
                        })}
                    </Tree>
                    <HScroll><ScrollArrow /><ScrollThumb /></HScroll>
                    <BottomTabs>
                        <BottomTab $w={89}>Bookmarks</BottomTab>
                        <BottomTab $w={161}>Search/Replace Results</BottomTab>
                    </BottomTabs>
                    <StatusGap />
                    <IdeStatus>
                        <StatusCell $w={53}>CAPS</StatusCell>
                        <StatusCell $w={48}>NUM</StatusCell>
                        <StatusCell $w={52}>SCRL</StatusCell>
                        <StatusCell $w={53} />
                    </IdeStatus>
                </Ide>
                <Browser>
                    <TabStrip>
                        <TabListButton><ChevronDown size={18} strokeWidth={2.6} /></TabListButton>
                        <ActiveTab>
                            <Favicon />
                            <TabText>Protractor practice website - Bank</TabText>
                            <TabClose><X size={17} strokeWidth={2.2} /></TabClose>
                        </ActiveTab>
                        <NewTab><Plus size={20} strokeWidth={2} /></NewTab>
                        <WindowControls>
                            <Minus size={14} />
                            <Square size={13} />
                            <X size={18} strokeWidth={1.4} />
                        </WindowControls>
                    </TabStrip>
                    <Toolbar>
                        <NavButton><ArrowLeft size={21} strokeWidth={2.1} /></NavButton>
                        <NavButton $disabled><ArrowRight size={21} strokeWidth={2.1} /></NavButton>
                        <NavButton><RotateCw size={20} strokeWidth={2.1} /></NavButton>
                        <Omnibox>
                            <SiteInfo><TuneIcon /></SiteInfo>
                            <UrlText>way2automation.com/angularjs-protractor/banking/#/login</UrlText>
                            <OmniStar><Star size={21} strokeWidth={2.1} color="#333" /></OmniStar>
                        </Omnibox>
                        <ToolIcon $w={64}><Extension /></ToolIcon>
                        <ToolSep />
                        <ToolIcon $w={66}><SidePanel /></ToolIcon>
                        <ProfilePill><Avatar /></ProfilePill>
                    </Toolbar>
                    <BookmarkBar>
                        <Bookmark $mr={25}><AppsGrid />Apps</Bookmark>
                        <Bookmark $mr={27.5} $gap={8}><Pinwheel />Dashboard | Inadev...</Bookmark>
                        <Bookmark $mr={29} $gap={7}><MsLogo />My Apps</Bookmark>
                        {bookmarks.map((name) => (
                            <Bookmark key={name}><BmFolder />{name}</Bookmark>
                        ))}
                        <MoreBookmarks><ChevronsRight size={18} strokeWidth={2.1} /></MoreBookmarks>
                        <BarSep />
                        <Bookmark $mr={18}><BmFolder />All Bookmarks</Bookmark>
                    </BookmarkBar>
                    <Page>
                        <BankHeader>
                            <HomeButton>Home</HomeButton>
                            <BankTitle>XYZ Bank</BankTitle>
                        </BankHeader>
                        <LoginCard>
                            <PrimaryButton $w={200}>Customer Login</PrimaryButton>
                            <PrimaryButton $w={250}>Bank Manager Login</PrimaryButton>
                        </LoginCard>
                    </Page>
                    <LoadStatus>Waiting for ekr.zdassets.com...</LoadStatus>
                </Browser>
                <RightEdge><TitleTail /></RightEdge>
            </Workspace>
            <Taskbar>
                <StartSlot><WinLogo /></StartSlot>
                <SearchBox>
                    <Search size={22} strokeWidth={1.5} style={{ transform: "scaleX(-1)" }} />
                    Type here to search
                    <SearchArt><Platypus /></SearchArt>
                </SearchBox>
                <TaskSlot><TaskView /></TaskSlot>
                <TaskSlot><EdgeLogo /></TaskSlot>
                <TaskSlot><ExplorerLogo /></TaskSlot>
                <TaskSlot><StoreLogo /></TaskSlot>
                <TaskSlot><MailLogo /></TaskSlot>
                <TaskSlot $focus $active><ChromeLogo /></TaskSlot>
                <TaskSlot><DockerLogo /></TaskSlot>
                <TaskSlot><TeamsLogo /></TaskSlot>
                <TaskSlot><ScriptLogo /></TaskSlot>
                <TaskSlot><StickyLogo /></TaskSlot>
                <TaskSlot><SnipLogo /></TaskSlot>
                <TaskSlot $active><TeamsLogo badge /></TaskSlot>
                <TaskSlot $active><AppTile $s={28}><Sealed size={24} /></AppTile></TaskSlot>
                <Tray>
                    <WeatherBall />
                    <WeatherText>30°C&nbsp; Sunny</WeatherText>
                    <TrayIcon><ChevronUp size={20} strokeWidth={1.4} /></TrayIcon>
                    <TrayIcon><BatteryIcon /></TrayIcon>
                    <TrayIcon><WifiIcon /></TrayIcon>
                    <TrayIcon><VolumeIcon /></TrayIcon>
                    <TrayText $w={42}>ENG<br />IN</TrayText>
                    <TrayText $w={88}>3:45 PM<br />12-Jan-24</TrayText>
                    <NotifySlot><NotifyIcon /></NotifySlot>
                </Tray>
            </Taskbar>

            <PlaybackTip>
                <TipLine $rule>Playback</TipLine>
                <TipLine>AngularAutomation</TipLine>
            </PlaybackTip>
            <PlaybackBar>
                <PlaybackTile><Sealed size={27} /></PlaybackTile>
                <PauseBars />
                <StopSquare />
            </PlaybackBar>
            <CaptureDock>
                <DockTop><GlobeTiny /><DockDots /></DockTop>
                <DockSlot><FaCamera size={24} /></DockSlot>
                <DockSlot><FaVideo size={24} /></DockSlot>
                <DockSlot>
                    <svg width="26" height="24" viewBox="0 0 26 24" fill="#fff">
                        <path d="M0 0h22v2H2v17H0z" />
                        <rect x="4" y="4" width="22" height="20" />
                    </svg>
                </DockSlot>
                <DockSlot><FaCog size={26} /></DockSlot>
            </CaptureDock>
            <Pointer width="16" height="26" viewBox="0 0 16 26">
                <path d="M1 1v20l5-4.500 3.500 8 3.500-1.500-3.500-8H15z" fill="#fff" stroke="#111" strokeWidth="1.200" />
            </Pointer>
        </Desktop>
    );
};

export default App;
